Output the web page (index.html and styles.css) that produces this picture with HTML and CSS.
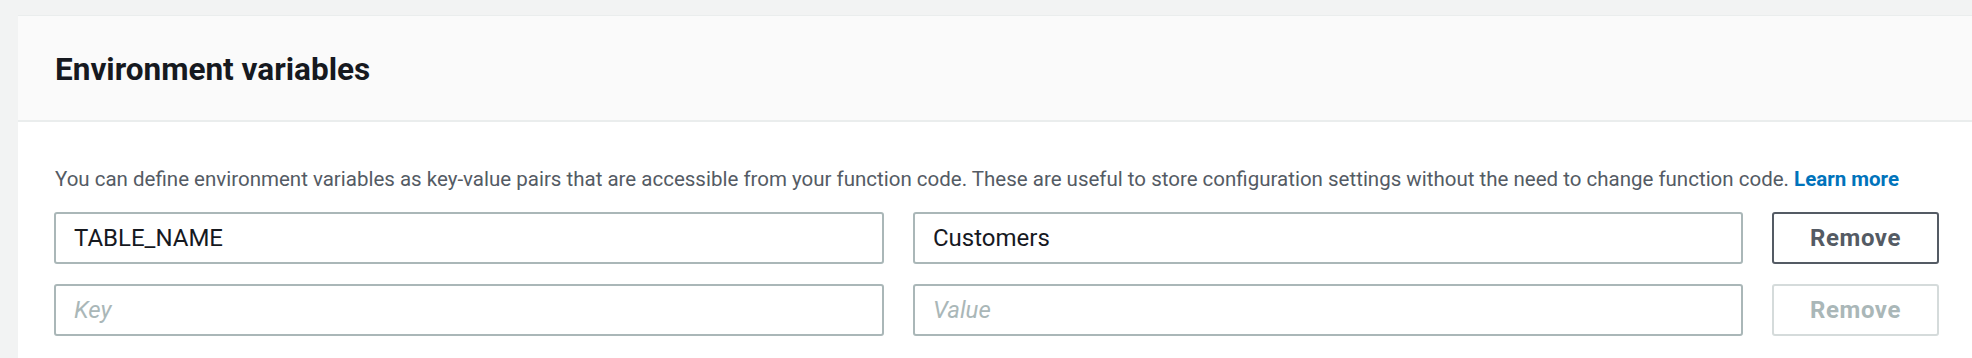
FILE: index.html
```html
<!DOCTYPE html>
<html lang="en">
<head>
<meta charset="utf-8">
<title>Environment variables</title>
<link rel="stylesheet" href="styles.css">
</head>
<body>
<div class="page">
  <section class="card">
    <header class="card-header">
      <h2 class="card-title">Environment variables</h2>
    </header>
    <div class="card-body">
      <p class="desc">You can define environment variables as key-value pairs that are accessible from your function code. These are useful to store configuration settings without the need to change function code. <a class="link" href="#">Learn more</a></p>
      <div class="rows">
        <div class="row">
          <input class="field" type="text" value="TABLE_NAME">
          <input class="field" type="text" value="Customers">
          <button class="btn" type="button">Remove</button>
        </div>
        <div class="row">
          <input class="field" type="text" placeholder="Key">
          <input class="field" type="text" placeholder="Value">
          <button class="btn" type="button" disabled>Remove</button>
        </div>
      </div>
    </div>
  </section>
</div>
</body>
</html>
```
FILE: styles.css
```css
* { box-sizing: border-box; }
html, body {
  margin: 0;
  padding: 0;
  background: #f2f3f3;
  font-family: Roboto, "Liberation Sans", Arial, sans-serif;
  color: #16191f;
}
.page {
  padding: 15px 0 0 18px;
}
.card {
  background: #ffffff;
  border-top: 1px solid #eaeded;
  min-height: 400px;
}
.card-header {
  background: #fafafa;
  border-bottom: 2px solid #eaeded;
  height: 106px;
  padding: 36px 0 0 37px;
}
.card-title {
  margin: 0;
  font-size: 31.5px;
  line-height: 35px;
  font-weight: 700;
  color: #16191f;
}
.card-body {
  padding: 43px 33px 0 36px;
}
.desc {
  margin: 0 0 19px 1px;
  font-size: 20.5px;
  line-height: 28px;
  color: #545b64;
}
.link {
  color: #0073bb;
  font-weight: 700;
  text-decoration: none;
}
.rows {
  display: flex;
  flex-direction: column;
  gap: 20px;
}
.row {
  display: grid;
  grid-template-columns: 1fr 1fr 167px;
  column-gap: 29px;
}
.field {
  height: 52px;
  border: 2px solid #aab7b8;
  border-radius: 3px;
  padding: 0 18px;
  font-family: inherit;
  font-size: 24px;
  color: #16191f;
  background: #ffffff;
  outline: none;
  width: 100%;
}
.field::placeholder {
  color: #aab7b8;
  font-style: italic;
}
.btn {
  height: 52px;
  border: 2px solid #545b64;
  border-radius: 3px;
  background: #ffffff;
  color: #545b64;
  font-family: inherit;
  font-size: 24px;
  font-weight: 700;
  padding: 0;
  letter-spacing: 0.6px;
}
.btn:disabled {
  border-color: #d5dbdb;
  color: #aab7b8;
}
```
